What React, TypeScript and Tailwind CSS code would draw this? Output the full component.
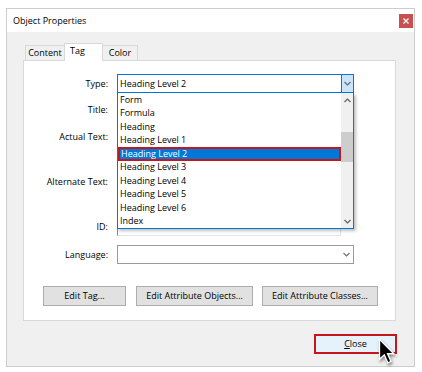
import React from "react";

const Chevron = ({ up = false, color = "#606060" }: { up?: boolean; color?: string }) => (
  <svg width="7" height="5" viewBox="0 0 7 5" className="block">
    <path
      d={up ? "M0.5 4 L3.5 1 L6.5 4" : "M0.5 1 L3.5 4 L6.5 1"}
      fill="none"
      stroke={color}
      strokeWidth="1.2"
    />
  </svg>
);

const items = [
  "Form",
  "Formula",
  "Heading",
  "Heading Level 1",
  "Heading Level 2",
  "Heading Level 3",
  "Heading Level 4",
  "Heading Level 5",
  "Heading Level 6",
  "Index",
];

function Label({ text, className = "" }: { text: string; className?: string }) {
  return <div className={`w-[84px] shrink-0 text-right leading-[12px] ${className}`}>{text}</div>;
}

export default function App() {
  return (
    <div className="w-[422px] h-[372px] bg-white relative overflow-hidden pt-[8px] pl-[6px] font-['Open_Sans',sans-serif] text-[9px] text-black">
      <div className="w-[409px] h-[359px] border border-[#cccccc] flex flex-col bg-[#f0f0f0]">
        {/* Title bar */}
        <div className="h-[23px] bg-white flex items-center justify-between pl-[6px] pr-[1px]">
          <span className="text-[9px] leading-[12px]">Object Properties</span>
          <div className="w-[14px] h-[14px] bg-[#c75050] flex items-center justify-center">
            <svg width="6" height="6" viewBox="0 0 6 6">
              <path d="M0.5 0.5 L5.5 5.5 M5.5 0.5 L0.5 5.5" stroke="#fff" strokeWidth="1.2" />
            </svg>
          </div>
        </div>

        {/* Body */}
        <div className="flex-1 pl-[16px] pr-[18px] pt-[11px] flex flex-col">
          {/* Tabs */}
          <div className="h-[17px] flex items-end pl-[2px]">
            <div className="w-[40px] h-[15px] border border-b-0 border-[#d9d9d9] bg-[#f0f0f0] flex items-center justify-center leading-[12px]">
              Content
            </div>
            <div className="relative z-10 w-[39px] h-[18px] -mb-[1px] border border-b-0 border-[#d9d9d9] bg-white flex items-start justify-start pl-[5px] pt-[1px] leading-[12px] -ml-[1px]">
              Tag
            </div>
            <div className="w-[35px] h-[15px] border border-b-0 border-l-0 border-[#d9d9d9] bg-[#f0f0f0] flex items-center justify-center leading-[12px]">
              Color
            </div>
          </div>

          {/* Panel */}
          <div className="w-[373px] h-[261px] border border-[#d9d9d9] bg-white flex flex-col">
            {/* Type */}
            <div className="flex items-center mt-[13px]">
              <Label text="Type:" />
              <div className="relative ml-[9px] w-[237px] h-[19px] border border-[#0078d7] bg-white flex items-center">
                <span className="pl-[2px] flex-1 leading-[12px]">Heading Level 2</span>
                <div className="w-[12px] h-full bg-[#cce4f7] border-l border-[#0078d7] flex items-center justify-center">
                  <Chevron color="#5a6e80" />
                </div>
                {/* Dropdown list */}
                <div className="absolute z-20 left-[-1px] top-[18px] w-[237px] h-[136px] border border-t-0 border-[#0078d7] bg-white flex shadow-[2px_2px_3px_rgba(0,0,0,0.25)]">
                  <div className="w-[223px] flex flex-col">
                    {items.map((it) =>
                      it === "Heading Level 2" ? (
                        <div
                          key={it}
                          className="h-[13.5px] bg-[#0078d7] text-white border-2 border-[#c4161c] pl-[1px] flex items-center leading-[12px]"
                        >
                          {it}
                        </div>
                      ) : (
                        <div key={it} className="h-[13.5px] pl-[2px] flex items-center leading-[12px]">
                          {it}
                        </div>
                      )
                    )}
                  </div>
                  <div className="w-[12px] bg-[#f0f0f0] flex flex-col">
                    <div className="h-[14px] flex items-center justify-center">
                      <Chevron up color="#606060" />
                    </div>
                    <div className="mt-[25px] h-[30px] bg-[#cdcdcd]" />
                    <div className="flex-1" />
                    <div className="h-[14px] flex items-center justify-center">
                      <Chevron color="#606060" />
                    </div>
                  </div>
                </div>
              </div>
            </div>

            {/* Title */}
            <div className="flex items-center mt-[8px]">
              <Label text="Title:" />
              <div className="ml-[9px] w-[224px] h-[18px] border border-[#c8c8c8]" />
            </div>

            {/* Actual Text */}
            <div className="flex items-start mt-[8px]">
              <Label text="Actual Text:" className="pt-[4px]" />
              <div className="ml-[9px] w-[224px] h-[38px] border border-[#c8c8c8]" />
            </div>

            {/* Alternate Text */}
            <div className="flex items-start mt-[7px]">
              <Label text="Alternate Text:" className="pt-[4px]" />
              <div className="ml-[9px] w-[224px] h-[38px] border border-[#c8c8c8]" />
            </div>

            {/* ID */}
            <div className="flex items-center mt-[7px]">
              <Label text="ID:" />
              <div className="ml-[9px] w-[224px] h-[19px] border border-[#e3e3e3] border-l-[#8a8a8a]" />
            </div>

            {/* Language */}
            <div className="flex items-center mt-[9px]">
              <Label text="Language:" />
              <div className="ml-[9px] w-[237px] h-[19px] border border-[#9a9a9a] bg-white flex items-center justify-end pr-[3px]">
                <Chevron color="#707070" />
              </div>
            </div>

            {/* Buttons */}
            <div className="flex items-center mt-[22px] pl-[19px]">
              <div className="w-[83px] h-[20px] bg-[#e1e1e1] border border-[#adadad] flex items-center justify-center leading-[12px]">
                Edit Tag...
              </div>
              <div className="ml-[10px] w-[117px] h-[20px] bg-[#e1e1e1] border border-[#adadad] flex items-center justify-center leading-[12px]">
                Edit Attribute Objects...
              </div>
              <div className="ml-[9px] w-[116px] h-[20px] bg-[#e1e1e1] border border-[#adadad] flex items-center justify-center leading-[12px]">
                Edit Attribute Classes...
              </div>
            </div>
          </div>

          {/* Close row */}
          <div className="flex justify-end mt-[13px] w-[374px]">
            <div className="w-[83px] h-[20px] border-2 border-[#c4161c] bg-[#e5f1fb] flex items-center justify-center leading-[12px]">
              <span>
                <span className="underline">C</span>lose
              </span>
            </div>
          </div>
        </div>
      </div>

      {/* Mouse cursor */}
      <svg
        className="absolute left-[378px] top-[338px]"
        width="19"
        height="28"
        viewBox="0 0 14 21"
        style={{ filter: "drop-shadow(1px 2px 1.5px rgba(0,0,0,0.45))" }}
      >
        <path
          d="M1 1 L1 16 L4.6 12.6 L7.2 18.6 L9.6 17.6 L7 11.8 L11.8 11.8 Z"
          fill="#000"
          stroke="#fff"
          strokeWidth="1"
          strokeLinejoin="miter"
        />
      </svg>
    </div>
  );
}
